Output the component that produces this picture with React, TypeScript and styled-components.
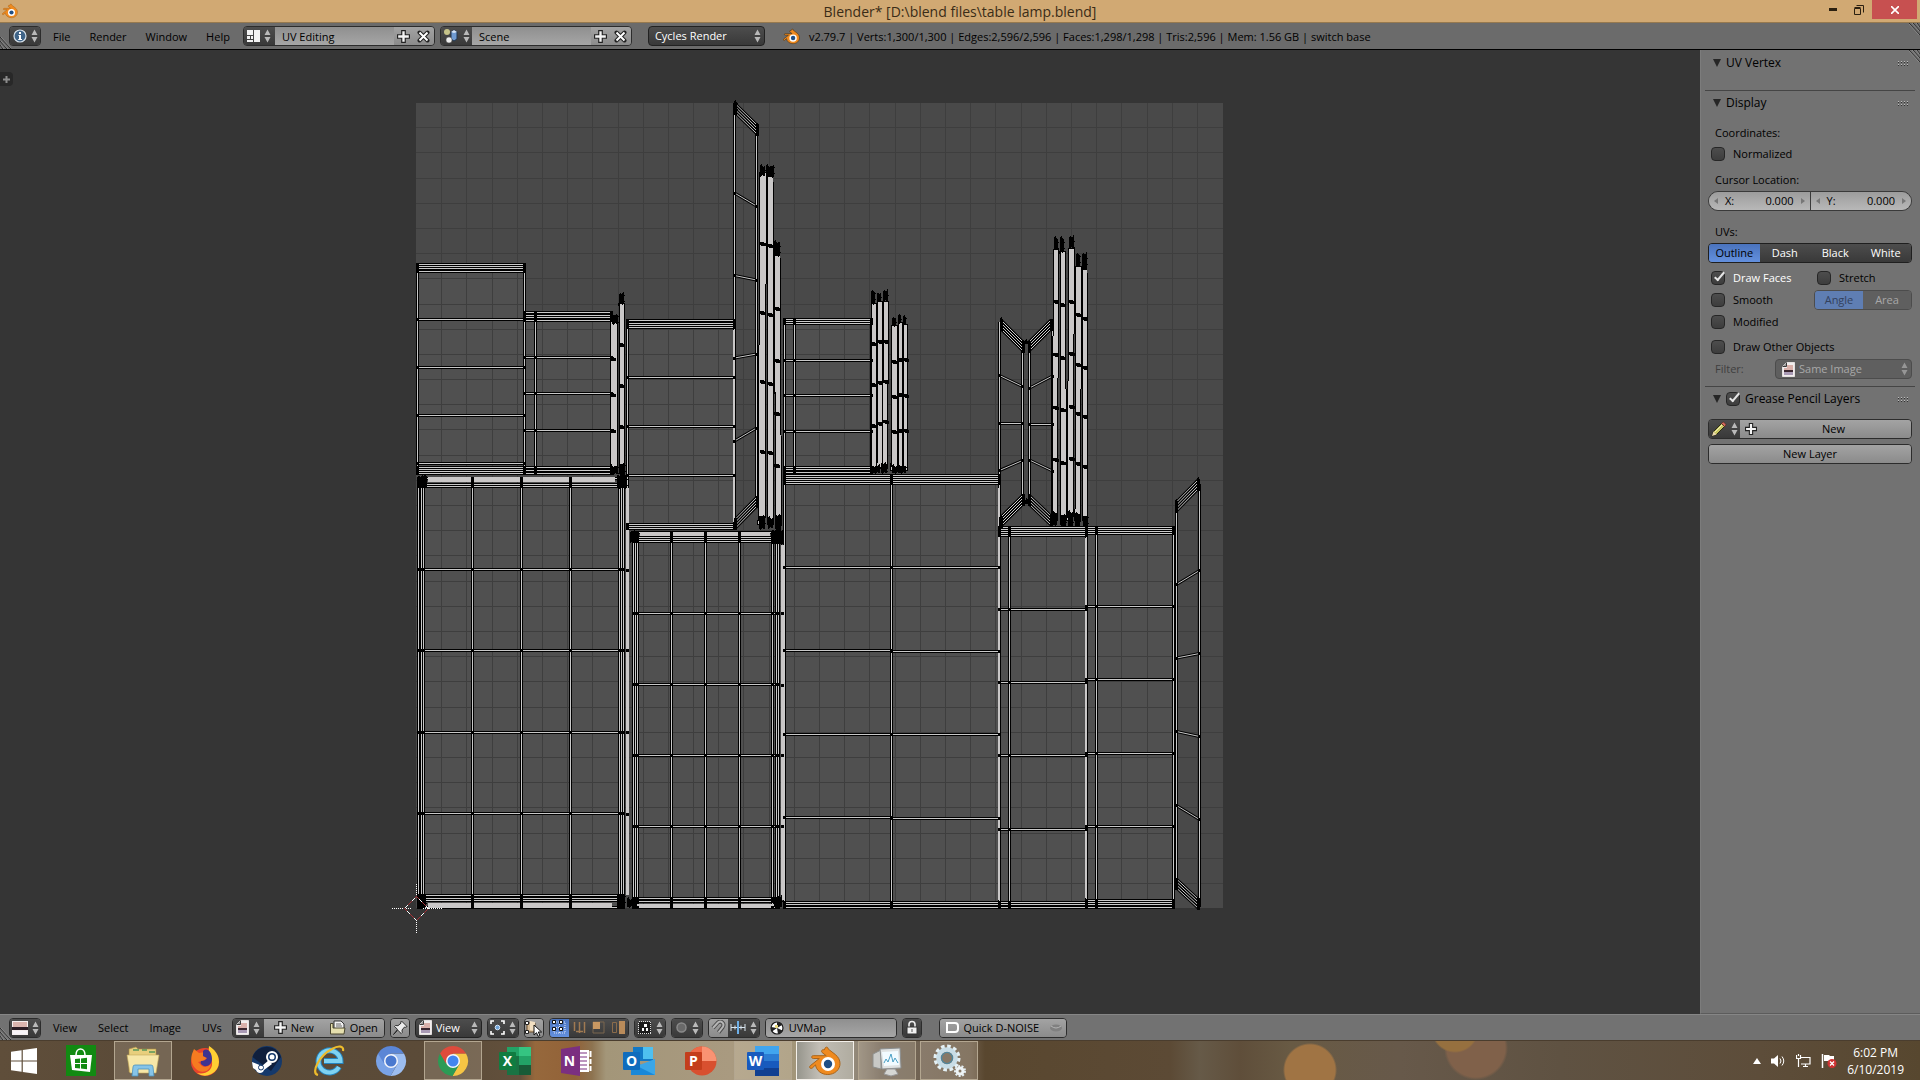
import React from "react";
import styled, { createGlobalStyle, css } from "styled-components";

const GlobalStyle = createGlobalStyle`
  *, *::before, *::after { box-sizing: border-box; }
  body { margin: 0; background: #353535; }
  button, input, select { font: inherit; color: inherit; margin: 0; }
  svg { display: block; flex: none; }
`;

const UI_FONT = `"Open Sans", "Noto Sans", sans-serif`;

/* ---------- window frame ---------- */

const Window = styled.div`
  display: flex;
  flex-direction: column;
  height: 100vh;
  overflow: hidden;
  font: 11px/20px ${UI_FONT};
  color: #000;
`;

const TitleBar = styled.header`
  display: grid;
  grid-template-columns: 1fr auto 1fr;
  height: 23px;
  flex: none;
  background: #d1a973;
  border-bottom: 1px solid #96794f;
`;

const TitleIcon = styled.div`
  padding: 3px 0 0 2px;
`;

const Title = styled.h1`
  margin: 0;
  font: 400 14px/24px ${UI_FONT};
  color: #3a2c17;
`;

const WindowButtons = styled.div`
  display: flex;
  justify-content: flex-end;
  padding-right: 3px;
`;

const WindowButton = styled.button<{ $close?: boolean }>`
  display: flex;
  align-items: center;
  justify-content: center;
  width: ${(p) => (p.$close ? 45 : 26)}px;
  height: 19px;
  padding: 0;
  border: 0;
  color: ${(p) => (p.$close ? "#fff" : "#2b2010")};
  background: ${(p) => (p.$close ? "#c75050" : "transparent")};
`;

const HeaderBar = styled.div<{ $bottom?: boolean }>`
  position: relative;
  display: flex;
  align-items: center;
  flex: none;
  height: ${(p) => (p.$bottom ? 26 : 27)}px;
  padding: 0 9px;
  background: ${(p) => (p.$bottom ? "#727272" : "#6b6b6b")};
  border-top: ${(p) => (p.$bottom ? "1px solid #868686" : "0")};
  border-bottom: ${(p) => (p.$bottom ? "0" : "1px solid #000")};
`;

const Corner = styled.svg<{ $right?: boolean }>`
  position: absolute;
  ${(p) => (p.$right ? "right: 0; top: 0;" : "left: 0; bottom: 0;")}
`;

const Menus = styled.nav<{ $bottom?: boolean }>`
  display: flex;
  gap: ${(p) => (p.$bottom ? 21 : 19)}px;
  padding: ${(p) => (p.$bottom ? "0 10px 0 12px" : "2px 13px 0 12px")};
`;

const MenuButton = styled.button`
  padding: 0;
  border: 0;
  background: none;
`;

const Group = styled.div<{ $gap?: number; $w?: number }>`
  display: flex;
  flex: none;
  height: 20px;
  width: ${(p) => (p.$w ? `${p.$w}px` : "auto")};
  margin-right: ${(p) => p.$gap ?? 5}px;
  border: 1px solid #2c2c2c;
  border-radius: 4px;
  overflow: hidden;
  > * + * {
    border-left: 1px solid #2c2c2c;
  }
`;

type Tone = "dark" | "light" | "blue" | "field";
const tones: Record<Tone, ReturnType<typeof css>> = {
  dark: css`background: linear-gradient(#4d4d4d, #393939); color: #fff;`,
  light: css`background: linear-gradient(#a3a3a3, #8b8b8b); color: #000;`,
  blue: css`background: linear-gradient(#4a73bd, #6390de); color: #000;`,
  field: css`background: linear-gradient(#8f8f8f, #a6a6a6); color: #000;`,
};

const Cell = styled.button<{ $tone?: Tone; $w?: number; $grow?: boolean; $pad?: number }>`
  display: flex;
  align-items: center;
  justify-content: center;
  gap: 4px;
  flex: ${(p) => (p.$grow ? "1 1 0" : "0 0 auto")};
  width: ${(p) => (p.$w ? `${p.$w}px` : "auto")};
  padding: 0 ${(p) => p.$pad ?? 0}px;
  border: 0;
  line-height: 18px;
  ${(p) => tones[p.$tone ?? "dark"]}
`;

const TextField = styled.input`
  flex: 1 1 0;
  min-width: 0;
  padding: 1px 7px 0;
  border: 0;
  border-radius: 0;
  outline: 0;
  line-height: 18px;
  ${tones.field}
`;

const FieldShell = styled.label`
  display: flex;
  align-items: center;
  flex: 1;
  padding-left: 4px;
  ${tones.field}
  input { background: none; padding: 0 5px; }
`;

const SelectShell = styled.div<{ $w?: number; $gap?: number; $disabled?: boolean; $tight?: boolean }>`
  display: flex;
  align-items: center;
  flex: ${(p) => (p.$w ? "none" : "1")};
  gap: 4px;
  height: 20px;
  width: ${(p) => (p.$w ? `${p.$w}px` : "auto")};
  margin-right: ${(p) => p.$gap ?? 5}px;
  padding: ${(p) => (p.$tight ? "0 3px" : "0 3px 0 6px")};
  border: 1px solid ${(p) => (p.$disabled ? "#4c4c4c" : "#222")};
  border-radius: 4px;
  ${(p) =>
    p.$disabled
      ? css`background: #5f5f5f; color: #a8a8a8;`
      : tones.dark}
`;

const Select = styled.select`
  appearance: none;
  flex: 1;
  min-width: 0;
  padding: 0;
  border: 0;
  outline: 0;
  background: none;
  line-height: 18px;
  opacity: 1;
`;

const Stats = styled.span`
  margin-left: 9px;
  padding-top: 2px;
  white-space: nowrap;
`;

/* ---------- editor ---------- */

const Editor = styled.main`
  display: flex;
  flex: 1;
  min-height: 0;
`;

const Canvas = styled.section`
  position: relative;
  flex: 1;
  min-width: 0;
  background: #353535;
`;

const Drawing = styled.svg`
  width: 100%;
  height: 100%;
`;

const ToolTab = styled.button`
  position: absolute;
  left: 0;
  top: 22px;
  display: flex;
  align-items: center;
  justify-content: center;
  width: 13px;
  height: 14px;
  padding: 0;
  border: 0;
  border-radius: 0 4px 4px 0;
  background: #282828;
`;

const Panel = styled.aside`
  position: relative;
  flex: none;
  width: 220px;
  padding-top: 1px;
  background: #727272;
  border-left: 1px solid #7c7c7c;
  border-bottom: 1px solid #5c5c5c;
`;

const Section = styled.section<{ $min?: number; $last?: boolean }>`
  min-height: ${(p) => p.$min ?? 0}px;
  margin: 0 5px 0 4px;
  padding: 0 3px;
  border-bottom: ${(p) => (p.$last ? "0" : "1px solid #454545")};
`;

const SectionHead = styled.header`
  display: flex;
  align-items: center;
  gap: 5px;
  height: 24px;
  padding: 0 2px 0 5px;
  > svg:last-child { margin-left: auto; }
`;

const SectionTitle = styled.h2`
  margin: 0;
  font: 400 12px/20px ${UI_FONT};
`;

const Stack = styled.div<{ $top?: number; $gap?: number; $bottom?: number }>`
  display: flex;
  flex-direction: column;
  gap: ${(p) => p.$gap ?? 1}px;
  padding-top: ${(p) => p.$top ?? 0}px;
  padding-bottom: ${(p) => p.$bottom ?? 0}px;
`;

const Caption = styled.p<{ $w?: number; $dim?: boolean }>`
  margin: 0;
  padding-left: 7px;
  width: ${(p) => (p.$w ? `${p.$w}px` : "auto")};
  height: 20px;
  color: ${(p) => (p.$dim ? "#3f3f3f" : "#000")};
`;

const Row = styled.div`
  display: flex;
  height: 20px;
`;

const Half = styled.div<{ $w?: number }>`
  flex: ${(p) => (p.$w ? "none" : "1")};
  width: ${(p) => (p.$w ? `${p.$w}px` : "auto")};
`;

const Segments = styled.div<{ $disabled?: boolean }>`
  display: flex;
  flex: 1;
  height: 20px;
  border: 1px solid ${(p) => (p.$disabled ? "#4c4c4c" : "#1f1f1f")};
  border-radius: 4px;
  overflow: hidden;
  > * + * { border-left: 1px solid ${(p) => (p.$disabled ? "#4c4c4c" : "#1f1f1f")}; }
`;

const Segment = styled.button<{ $on?: boolean }>`
  flex: 1;
  padding: 0;
  border: 0;
  line-height: 18px;
  ${(p) => tones[p.$on ? "blue" : "dark"]}
  &:disabled {
    background: ${(p) => (p.$on ? "#5f7eb3" : "#5f5f5f")};
    color: ${(p) => (p.$on ? "#33415c" : "#a8a8a8")};
  }
`;

const Check = styled.label<{ $on?: boolean }>`
  display: flex;
  align-items: center;
  gap: 8px;
  height: 20px;
  padding-left: 3px;
  color: ${(p) => (p.$on ? "#fff" : "#000")};
`;

const CheckBox = styled.input`
  appearance: none;
  position: relative;
  flex: none;
  width: 14px;
  height: 14px;
  border: 1px solid #262626;
  border-radius: 4px;
  background: linear-gradient(#4d4d4d, #3d3d3d);
  &:checked::after {
    content: "";
    position: absolute;
    left: 5px;
    top: -2px;
    width: 5px;
    height: 11px;
    border: solid #e6e6e6;
    border-width: 0 2px 2px 0;
    transform: rotate(40deg);
  }
`;

const NumberPair = styled.div`
  display: flex;
  height: 20px;
  border: 1px solid #3a3a3a;
  border-radius: 10px;
  overflow: hidden;
  > * + * { border-left: 1px solid #3a3a3a; }
`;

const NumberCell = styled.label`
  display: flex;
  align-items: center;
  flex: 1 1 0;
  gap: 7px;
  min-width: 0;
  padding: 0 5px;
  line-height: 18px;
  background: linear-gradient(#9c9c9c, #b8b8b8);
  input {
    flex: 1;
    min-width: 0;
    width: 0;
    padding: 0;
    border: 0;
    outline: 0;
    text-align: right;
    background: none;
  }
`;

/* ---------- taskbar ---------- */

const TaskBar = styled.footer`
  display: flex;
  flex: none;
  justify-content: space-between;
  height: 40px;
  border-top: 1px solid #4a3d2e;
  background:
    radial-gradient(circle at 1310px 29px, #a07444 25px, transparent 27px),
    radial-gradient(circle at 1455px -12px, #96703f 22px, transparent 24px),
    radial-gradient(circle at 1476px 7px, #80614a 29px, transparent 32px),
    linear-gradient(90deg, #5f4e3a 0, #5a4a38 160px, #5b4b38 440px, #62503c 520px, #96683c 535px, #926238 575px, #8d7350 592px,
      #a39679 606px, #a99a80 730px, #a39679 790px, #9a9080 850px, #74685a 880px, #6d5d4a 970px, #59472f 985px, #5c4a35 1170px, #665a48 1200px, #5f4e3a 1240px,
      #685a44 1290px, #67594a 1400px, #5f5242 1560px, #5d4d3a 1760px, #57472f 1920px);
`;

const Tasks = styled.div`
  display: flex;
  gap: 4px;
`;

const Task = styled.button<{ $open?: boolean; $active?: boolean; $w?: number }>`
  display: flex;
  align-items: center;
  justify-content: center;
  width: ${(p) => p.$w ?? 58}px;
  height: 39px;
  padding: 0;
  border: 1px solid ${(p) => (p.$active ? "#f4f0ea" : p.$open ? "#b3a690" : "transparent")};
  background: ${(p) => (p.$active ? "linear-gradient(90deg, #96958c, #c2beb6 40%, #b0aca0)" : p.$open ? "rgba(255, 246, 225, 0.17)" : "none")};
`;

const Tray = styled.div`
  display: flex;
  align-items: center;
  gap: 10px;
  padding-right: 16px;
`;

const Clock = styled.time`
  font: 12px/17px ${UI_FONT};
  color: #fff;
  text-align: center;
`;

/* ---------- small drawings ---------- */

const Arrows = ({ dim }: { dim?: boolean }) => (
  <svg width="7" height="14" viewBox="0 0 7 14" fill={dim ? "#969696" : "#b9b9b9"}>
    <path d="M3.500 0.500L6.500 6H.5zM3.500 13.500L6.500 8H.5z" />
  </svg>
);

const Plus = ({ s = 11 }: { s?: number }) => (
  <svg width={s} height={s} viewBox="0 0 11 11">
    <path d="M4 .5h3V4h3.500v3H7v3.500H4V7H.5V4H4z" fill="#f4f4f4" stroke="#222" strokeWidth="1" />
  </svg>
);

const Cross = () => (
  <svg width="13" height="13" viewBox="0 0 13 13">
    <path d="M2.500 2.500l8 8M10.500 2.500l-8 8" stroke="#222" strokeWidth="4" strokeLinecap="round" />
    <path d="M2.500 2.500l8 8M10.500 2.500l-8 8" stroke="#fff" strokeWidth="2" />
  </svg>
);

const InfoIcon = () => (
  <svg width="14" height="14" viewBox="0 0 14 14">
    <circle cx="7" cy="7" r="6" fill="#3f6488" stroke="#d5e0ea" strokeWidth="1.200" />
    <path d="M6 3h2v2H6zM5.500 6H8v4h1v1H5.200v-1H6V7h-.5z" fill="#fff" />
  </svg>
);

const ScreenIcon = () => (
  <svg width="13" height="14" viewBox="0 0 13 14" fill="#f2f2f2" shapeRendering="crispEdges">
    <path d="M0 1h6v5H0zM0 7h3v3H0zM4 7h2v3H4zM7 1h6v12H7zM0 11h6v2H0z" />
  </svg>
);

const SceneIcon = () => (
  <svg width="16" height="16" viewBox="0 0 16 16">
    <circle cx="4" cy="4" r="3" fill="#e6e29a" opacity=".8" />
    <path d="M8 4l3-2 3 2v7l-3 2-3-2z" fill="#6f9ad0" stroke="#23374f" />
    <path d="M8 4l3-2 3 2-3 1z" fill="#d6e5f6" />
    <circle cx="6" cy="12" r="3" fill="#eee" stroke="#555" strokeWidth=".5" />
  </svg>
);

const BlenderLogo = ({ s, flat }: { s: number; flat?: boolean }) => (
  <svg width={s} height={s} viewBox="0 0 32 30">
    <path
      d="M16.500 1.500c1.400-1 3 .2 2.600 1.400l7.300 5.700c3 2.500 4.600 5.500 4.600 9 0 6-5.200 10.900-12.200 10.900-6.400 0-11.500-4-12.300-9.600L3.300 22c-2 1.300-3.700-.8-2-2.300l9-7.200H4.300c-2.200 0-2.200-2.800 0-2.800h12.900l-4.100-3.200c-1.500-1.500.3-3.600 2-2.500z"
      fill="#ef8a1f"
      stroke={flat ? "#a9641a" : "#3d2a12"}
      strokeWidth="1"
    />
    <circle cx="19" cy="18" r="7" fill="#fff" />
    <circle cx="19" cy="18" r="4.200" fill="#1f4f86" />
  </svg>
);

const ImageIcon = ({ page }: { page?: boolean }) => (
  <svg width={page ? 13 : 16} height={page ? 15 : 14} viewBox={page ? "0 0 13 15" : "0 0 16 14"}>
    {page ? (
      <>
        <path d="M4.500.5h8v14H.5v-10z" fill="#f1eeee" stroke="#e4e0e0" />
        <path d="M.5 4.500h4v-4" fill="#9c9c9c" stroke="#3a3a3a" />
        <path d="M5 3h6v5H2V6h3z" fill="#d9b0aa" />
        <path d="M2 8h9v2H2z" fill="#3b2730" />
        <path d="M2 10h9v3H2z" fill="#a99ab5" />
      </>
    ) : (
      <>
        <path d="M0 0h16v14H0z" fill="#f4eeee" />
        <path d="M1 1h14v5H1z" fill="#dab4ae" />
        <path d="M0 6h16v3H0z" fill="#2c1e26" />
        <path d="M1 10h14v3H1z" fill="#f8f4f8" />
      </>
    )}
  </svg>
);

const FolderIcon = () => (
  <svg width="16" height="15" viewBox="0 0 16 15">
    <path d="M4 1h7l3 3v8H4z" fill="#f2f2f2" stroke="#333" />
    <path d="M6 4h5M6 6h6" stroke="#666" />
    <path d="M.5 3.500H3V8h12l-1 6H.5z" fill="#e5dfae" stroke="#4a4630" />
  </svg>
);

const PinIcon = () => (
  <svg width="16" height="16" viewBox="0 0 16 16">
    <path d="M9.500 1l5.500 5.500-1.500.8-1-.3-2.500 3 .2 2.500-1 1-3.400-3.300L1.500 14.500l4-5.200L2.500 6.500l1-1L6 5.700l3-2.500L8.700 2z" fill="#ececec" stroke="#222" strokeWidth=".9" />
  </svg>
);

const PivotIcon = () => (
  <svg width="15" height="15" viewBox="0 0 15 15" fill="none">
    <path d="M1 4V1h3M11 1h3v3M14 11v3h-3M4 14H1v-3" stroke="#fff" strokeWidth="1.600" />
    <circle cx="7.500" cy="7.500" r="2.300" fill="#6fa3d8" stroke="#d6e7f8" />
  </svg>
);

const SyncIcon = () => (
  <svg width="18" height="18" viewBox="0 0 18 18">
    <path d="M2 4h8v9H2z" fill="#d9bd97" stroke="#6b4d2a" />
    <path d="M5 2l5 1v9l-5-1z" fill="#f1dfc2" />
    <path d="M.5 2.500h3v3h-3zM.5 11.500h3v3h-3z" fill="#fff" stroke="#222" />
    <path d="M9 6v10l2.500-2.300 1.600 3.600 1.800-.8-1.600-3.500h3.300z" fill="#fff" stroke="#111" />
  </svg>
);

const ModeIcon = ({ kind }: { kind: "vertex" | "edge" | "face" | "island" }) => (
  <svg width="15" height="15" viewBox="0 0 15 15" fill="none">
    {kind === "vertex" && (
      <>
        <path d="M2 2h11v11H2zM7.500 2v11M2 7.500h11" stroke="#dbe6fa" strokeDasharray="1 1" />
        <path d="M.5.5h3v3h-3zM7.500.5h3v3h-3zM.5 7.500h3v3h-3zM7.500 7.500h3v3h-3z" fill="#fff" stroke="#111" />
      </>
    )}
    {kind === "edge" && <path d="M2.500 2v9M7.500 2v11M12.500 2v11M4 11.500h7" stroke="#a07a52" strokeWidth="1.500" />}
    {kind === "face" && (
      <>
        <path d="M2 2h11v11H2z" stroke="#7b664e" />
        <path d="M2 2h7v7H2z" fill="#c99862" />
      </>
    )}
    {kind === "island" && (
      <>
        <path d="M1.500 2.500h4v10h-4z" stroke="#8b6c4b" />
        <path d="M8 1h6v13H8z" fill="#b98b5a" />
      </>
    )}
  </svg>
);

const SnapTarget = () => (
  <svg width="15" height="15" viewBox="0 0 15 15" shapeRendering="crispEdges">
    <path d="M1.500 1.500h12v12h-12z" fill="#1c1c1c" stroke="#ddd" strokeDasharray="1 1" />
    <path d="M7 4h3v3H7zM9 8h2v3H9zM5 8h2v3H5z" fill="#fff" />
  </svg>
);

const FalloffIcon = () => (
  <svg width="13" height="13" viewBox="0 0 13 13">
    <circle cx="6.500" cy="6.500" r="4.500" fill="#6a6a6a" stroke="#8a8a8a" strokeWidth="1.500" />
  </svg>
);

const MagnetIcon = () => (
  <svg width="15" height="15" viewBox="0 0 15 15" fill="none">
    <path d="M2 8l5-5.500c3-2.500 7 1 4.800 4.500L7.500 12.500" stroke="#4e4e4e" strokeWidth="4" />
    <path d="M2 8l5-5.500c3-2.500 7 1 4.800 4.500L7.500 12.500" stroke="#b5b5b5" strokeWidth="2" />
  </svg>
);

const IncrementIcon = () => (
  <svg width="16" height="13" viewBox="0 0 16 13" fill="none">
    <path d="M1 3v7M15 3v7M1 6.500h14M5 4.500v4M11 4.500v4" stroke="#d8e4ee" />
    <path d="M8 0v13" stroke="#6db0ea" strokeWidth="2" />
  </svg>
);

const UvIcon = () => (
  <svg width="14" height="14" viewBox="0 0 14 14">
    <circle cx="7" cy="7" r="6" fill="#fff" stroke="#1a1a1a" strokeWidth="1.200" />
    <path d="M7 1a6 6 0 0 1 5 3L7 7zM7 7l5.500 2.500A6 6 0 0 1 8 13zM7 7L2 10.500A6 6 0 0 1 1 6z" fill="#222" />
    <path d="M5 4h3v3H5z" fill="#e9d97c" />
  </svg>
);

const LockIcon = () => (
  <svg width="12" height="15" viewBox="0 0 12 15">
    <path d="M3 7V4.500a3 3 0 0 1 6 0V7" fill="none" stroke="#eee" strokeWidth="1.600" />
    <path d="M1 7h10v7H1z" fill="#f0f0f0" stroke="#333" />
    <path d="M6 9v3" stroke="#555" />
  </svg>
);

const PencilIcon = () => (
  <svg width="16" height="16" viewBox="0 0 16 16">
    <path d="M1 15l1.500-4.500 8-8 3 3-8 8z" fill="#c9c763" stroke="#2a2a16" />
    <path d="M10.500 2.500L12 1c1 0 3 2 3 3l-1.500 1.500z" fill="#d36b5d" stroke="#4d201a" strokeWidth=".6" />
    <path d="M1 15l1.500-4.500 3 3z" fill="#ecd9b0" />
    <path d="M4 11l7-7" stroke="#f1f0b5" />
  </svg>
);

const Triangle = () => (
  <svg width="8" height="8" viewBox="0 0 8 8"><path d="M0 0h8L4 8z" fill="#262626" /></svg>
);

const Grip = () => (
  <svg width="12" height="6" viewBox="0 0 12 6">
    <path d="M0 1.500h12M0 4.500h12" stroke="#bdbdbd" strokeDasharray="1 2" />
    <path d="M0 2.500h12M0 5.500h12" stroke="#333" strokeDasharray="1 2" />
  </svg>
);

const Caret = ({ flip }: { flip?: boolean }) => (
  <svg width="4" height="6" viewBox="0 0 4 6"><path d={flip ? "M4 0v6L0 3z" : "M0 0v6l4-3z"} fill="#777" /></svg>
);

const CornerMarks = ({ right }: { right?: boolean }) => (
  <Corner $right={right} width="11" height="13" viewBox="0 0 11 13" fill="none">
    <path d="M0 1l11 12M0 5l7 8M0 9l3 4" transform={right ? "rotate(180 5.500 6.500)" : undefined} stroke="#2b2b2b" />
    <path d="M1 1l10 11M1 5l7 8M1 9l3 4" transform={right ? "rotate(180 5.500 6.500)" : undefined} stroke="#a0a0a0" strokeWidth=".6" />
  </Corner>
);

/* ---------- UV layout ---------- */

type Seg = [number, number, number, number];

const segs: Seg[] = [];
const slants: Seg[] = [];
const dots: [number, number][] = [];
const fills: string[] = [];

const ends = (a: number[]) => [Math.min(...a), Math.max(...a)];
const sheet = (xs: number[], ys: number[]) => {
  const [x1, x2] = ends(xs);
  const [y1, y2] = ends(ys);
  fills.push(`M${x1} ${y1}H${x2}V${y2}H${x1}z`);
  ys.forEach((y) => segs.push([x1 - 0.5, y, x2 + 0.5, y]));
  xs.forEach((x) => segs.push([x, y1 - 0.5, x, y2 + 0.5]));
  xs.forEach((x) => ys.forEach((y) => dots.push([x, y])));
};
const fan = (x1: number, y1: number, x2: number, y2: number) => {
  for (let i = 0; i < 4; i++) {
    slants.push([x1, y1 + 3 * i, x2, y2 + 3 * i]);
    dots.push([x1, y1 + 3 * i], [x2, y2 + 3 * i]);
  }
};
const link = (x1: number, y1: number, x2: number, y2: number) => {
  slants.push([x1, y1, x2, y2]);
  dots.push([x1, y1], [x2, y2]);
};

// upper left pieces
sheet([417.5, 524.5], [264.5, 266.5, 268.5, 271.5, 319.5, 367.5, 415.5, 463.5, 467.5, 469.5, 471.5, 473.5]);
sheet([524.5, 535.5, 611.5], [312.5, 315.5, 317.5, 320.5, 357.5, 393.5, 430.5, 467.5, 470.5, 473.5]);
// large left body
sheet([418.5, 421.5, 423.5, 472.5, 521.5, 570.5, 619.5, 621.5, 623.5], [478.5, 484.5, 486.5, 569.5, 650.5, 732.5, 813.5, 895.5, 898.5, 900.5, 907.5]);
// second column
sheet([627.5, 734.5], [320.5, 323.5, 325.5, 327.5, 377.5, 426.5, 475.5, 524.5, 526.5, 528.5]);
sheet([633.5, 635.5, 637.5, 671.5, 705.5, 739.5, 772.5, 776.5, 778.5], [532.5, 537.5, 539.5, 541.5, 613.5, 684.5, 755.5, 826.5, 898.5, 901.5, 907.5]);
// third column
sheet([784.5, 794.5, 871.5], [319.5, 321.5, 323.5, 360.5, 395.5, 431.5, 467.5, 469.5, 472.5]);
sheet([784.5, 891.5], [475.5, 477.5, 479.5, 481.5, 483.5, 567.5, 650.5, 734.5, 817.5, 902.5, 904.5, 907.5]);
sheet([891.5, 999.5], [475.5, 477.5, 479.5, 481.5, 483.5, 567.5, 651.5, 734.5, 818.5, 902.5, 904.5, 907.5]);
// lower right columns
sheet([999.5, 1009.5, 1086.5], [527.5, 529.5, 531.5, 533.5, 535.5, 609.5, 682.5, 755.5, 829.5, 902.5, 904.5, 907.5]);
sheet([1086.5, 1096.5, 1173.5], [527.5, 529.5, 531.5, 533.5, 606.5, 679.5, 753.5, 826.5, 900.5, 902.5, 904.5, 907.5]);

// tall flap
segs.push([734.5, 103, 734.5, 530], [756.5, 126, 756.5, 506]);
fan(735.5, 104, 757, 125);
link(734.5, 193, 756.5, 206);
link(734.5, 275.5, 756.5, 280);
link(734.5, 358, 756.5, 354);
link(734.5, 441, 756.5, 428);
fan(735.5, 519, 757, 497);

// hourglass
segs.push([999.5, 322, 999.5, 526], [1022.5, 348, 1022.5, 498], [1029.5, 348, 1029.5, 498], [1052.5, 325, 1052.5, 520]);
fan(1001, 320, 1023, 342);
fan(1029, 342, 1051, 320);
link(999.5, 375.5, 1022.5, 386.5);
link(1029.5, 388, 1052.5, 376);
link(999.5, 423.5, 1022.5, 423.5);
link(1029.5, 424.5, 1052.5, 424.5);
link(999.5, 470.5, 1022.5, 460.5);
link(1029.5, 460, 1052.5, 471);
fan(1001, 517, 1023, 495);
fan(1029, 495, 1051, 516);

// right flap
segs.push([1176.5, 505, 1176.5, 884], [1199.5, 484, 1199.5, 906]);
fan(1176.5, 502, 1198, 480);
link(1176.5, 584.5, 1199.5, 570.5);
link(1176.5, 658, 1199.5, 653.5);
link(1176.5, 731.5, 1199.5, 736.5);
link(1176.5, 805.5, 1199.5, 819.5);
fan(1176.5, 879, 1198, 899);

// narrow filled strips: top-left x, top-right x, bottom-left x, bottom-right x, top y, bottom y, crossings
const strips: [number, number, number, number, number, number, number[]][] = [
  [610, 617, 610, 617, 318, 470, [358, 394, 430]],
  [619, 624, 620, 624, 303, 470, [344.5, 385.5, 426]],
  [760, 766.5, 758, 765, 172, 524, [243.5, 312.5, 381.5, 451]],
  [767.5, 773, 768, 774, 176, 524, [245.5, 314.5, 383.5, 452.5]],
  [774.5, 780, 775.5, 781.5, 255, 524, [308.5, 360.5, 413.5, 465.5]],
  [871, 876, 871, 876, 303, 468, [343.5, 384.5, 425.5]],
  [877.5, 882.5, 877, 882, 301, 468, [341.5, 382.5, 423]],
  [883.5, 888.5, 882.5, 887.5, 301, 468, [341, 381.5, 421]],
  [891.5, 897, 891, 897, 325, 470, [361.5, 396.5, 431.5]],
  [898, 902, 898, 902, 322, 470, [359.5, 394.5, 430.5]],
  [903.5, 907.5, 903.5, 907.5, 324, 470, [359.5, 395.5, 430.5]],
  [1053.5, 1058.5, 1052, 1057.5, 249, 520, [301.5, 354.5, 407.5, 459.5]],
  [1060, 1065.5, 1061, 1066.5, 251, 520, [304.5, 357, 409.5, 462.5]],
  [1069, 1074.5, 1067, 1073, 248, 520, [301, 353.5, 406, 458.5]],
  [1075.5, 1081.5, 1075, 1080.5, 266, 520, [314.5, 364.5, 413.5, 463.5]],
  [1082.5, 1087, 1083, 1088, 269, 520, [318.5, 367, 416.5, 466.5]],
];

// solid slabs along the body edges
const slabs: Seg[] = [
  [428, 477, 615, 482],
  [428, 903, 612, 907],
  [626, 488, 629, 895],
  [640, 532, 770, 536],
  [638, 904, 775, 908],
  [781, 545, 784, 900],
  [998, 488, 1000, 900],
  [1085, 538, 1087, 898],
  [733, 330, 735, 522],
];

// clusters of overlapping vertices
const clusters: Seg[] = [
  [418, 476, 427, 487], [617, 475, 627, 488], [610, 466, 618, 474], [619, 464, 625, 475], [612, 315, 618, 324], [619, 294, 624, 304],
  [418, 896, 426, 907], [617, 895, 625, 907], [627, 899, 637, 907], [630, 532, 638, 542], [772, 530, 783, 544], [774, 897, 782, 907],
  [760, 166, 765, 176], [766, 166, 774, 177], [774, 242, 780, 256], [759, 516, 765, 529], [768, 518, 773, 528], [775, 515, 781, 530],
  [871, 292, 875, 304], [877, 293, 881, 301], [883, 291, 888, 301], [872, 466, 880, 473], [881, 464, 887, 473],
  [892, 318, 896, 326], [898, 315, 901, 323], [903, 317, 906, 325], [892, 466, 906, 473],
  [1054, 238, 1058, 250], [1060, 238, 1064, 252], [1069, 237, 1074, 248], [1076, 255, 1080, 266], [1082, 254, 1087, 269],
  [1052, 513, 1057, 525], [1060, 515, 1066, 526], [1068, 512, 1073, 526], [1075, 514, 1080, 526], [1083, 516, 1088, 526],
  [734, 102, 737, 112], [756, 123, 758, 132], [1000, 318, 1002, 328], [1022, 341, 1030, 344], [1022, 500, 1030, 504],
  [999, 518, 1001, 530], [1050, 321, 1052, 330], [1175, 501, 1177, 510], [1197, 479, 1199, 489], [1197, 902, 1200, 909],
];

const lumpy = ([x1, y1, x2, y2]: Seg) => {
  let d = `M${x1} ${y1}`;
  let k = Math.round(x1 + y1);
  for (let x = x1; x < x2; x += 3) d += `L${x + 1.5} ${y1 - (k++ % 3)}L${Math.min(x + 3, x2)} ${y1 + (k % 2)}`;
  for (let y = y1; y < y2; y += 3) d += `L${x2 + (k++ % 2)} ${y + 1.5}L${x2} ${Math.min(y + 3, y2)}`;
  for (let x = x2; x > x1; x -= 3) d += `L${x - 1.5} ${y2 + (k++ % 2)}L${Math.max(x - 3, x1)} ${y2 - (k % 2)}`;
  return d + "z";
};

const toPath = (list: Seg[]) => list.map(([a, b, c, d]) => `M${a} ${b}L${c} ${d}`).join("");
const segPath = toPath(segs);
const slantPath = toPath(slants);
const dotPath = dots.map(([x, y]) => `M${x - 1.5} ${y - 1.5}h3v3h-3z`).join("");
const gridPath = Array.from({ length: 31 }, (_, i) => {
  const o = Math.round((i + 1) * 25.19);
  return `M${416.5 + o} 103V908M416 ${103.5 + o - 1}H1223`;
}).join("");

const UvLayout = () => (
  <Drawing viewBox="0 50 1700 964" preserveAspectRatio="xMidYMid slice" shapeRendering="crispEdges" fill="none" role="img" aria-label="UV layout">
    <rect x="416" y="103" width="807" height="805" fill="#494949" />
    <path d={fills.join("")} fill="#505050" />
    <path d={gridPath} stroke="#3e3e3e" />
    <path d={segPath} stroke="#000" strokeWidth="3" />
    <path d={slantPath} stroke="#000" strokeWidth="3" shapeRendering="geometricPrecision" />
    <path d={segPath} stroke="#c9c9c9" />
    <path d={slantPath} stroke="#c9c9c9" shapeRendering="geometricPrecision" />
    {slabs.map(([x1, y1, x2, y2]) => (
      <rect key={`${x1}-${y1}`} x={x1} y={y1} width={x2 - x1} height={y2 - y1} fill="#c9c7c7" />
    ))}
    <path
      d="M472.500 477V488M521.500 477V488M570.500 477V488M671.500 531V543M705.500 531V543M739.500 531V543M472.500 895V908M521.500 895V908M570.500 895V908M671.500 897V908M705.500 897V908M739.500 897V908M626 570h3M626 650h3M626 732h3M626 814h3M781 613h3M781 685h3M781 755h3M781 826h3"
      stroke="#000"
      strokeWidth="3"
    />
    {strips.map(([a, b, c, d, t, u, cross]) => (
      <g key={`${a}-${t}`}>
        <path d={`M${a} ${t}H${b}L${d} ${u}H${c}z`} fill="#c9c7c7" stroke="#000" />
        <path d={cross.map((y) => `M${a - 0.5} ${y}h3v1h3`).join("")} stroke="#000" strokeWidth="3" />
      </g>
    ))}
    <path d={dotPath} fill="#000" />
    <path d={clusters.map(lumpy).join("")} fill="#000" />
    <g>
      <path d="M392 908.500H412M423 908.500H443M416.500 884V898M416.500 920V934" stroke="#fff" strokeDasharray="1 1" />
      <path d="M404.500 908.500l12-12 12 12-12 12z" stroke="#a33238" />
      <path d="M404.500 908.500l12-12 12 12-12 12z" stroke="#fff" strokeDasharray="5 5" />
    </g>
  </Drawing>
);

/* ---------- taskbar icons ---------- */

const OfficeTile = ({ letter, c, back }: { letter: string; c: string; back: React.ReactNode }) => (
  <svg width="32" height="32" viewBox="0 0 32 32">
    {back}
    <rect x="0" y="7" width="17" height="18" rx="1" fill={c} />
    <text x="8.500" y="21" textAnchor="middle" fontFamily="Open Sans, sans-serif" fontWeight="700" fontSize="14" fill="#fff">{letter}</text>
  </svg>
);

const ChromeIcon = ({ mono }: { mono?: boolean }) => (
  <svg width="32" height="32" viewBox="0 0 32 32">
    <path d="M16 16V8.500h13A15 15 0 0 1 15.500 31l7-12z" fill={mono ? "#9cbdf0" : "#f6c544"} />
    <path d="M16 16l6.500 3-7 12A15 15 0 0 1 3 8.500z" fill={mono ? "#79a2e6" : "#2b9b55"} />
    <path d="M3 8.500A15 15 0 0 1 29 8.500H16l-7 10z" fill={mono ? "#5b86d6" : "#de4b3c"} />
    <circle cx="16" cy="16" r="7" fill="#f4f6fb" />
    <circle cx="16" cy="16" r="5.500" fill={mono ? "#4a79cf" : "#4385ee"} />
  </svg>
);

const WindowsIcon = () => (
  <svg width="26" height="26" viewBox="0 0 26 26" fill="#fff">
    <path d="M0 3.700l10.600-1.500v10.200H0zM11.800 2L26 0v12.400H11.800zM0 13.600h10.600v10.200L0 22.300zM11.800 13.600H26V26l-14.200-2z" />
  </svg>
);

const StoreIcon = () => (
  <svg width="30" height="31" viewBox="0 0 30 31">
    <rect width="30" height="31" fill="#128a12" />
    <path d="M4 10h22l-2 17-18-2z" fill="#fff" />
    <path d="M10 10c0-8 9-8 9 0" fill="none" stroke="#fff" strokeWidth="1.600" />
    <path d="M9 14l5-.5V18H9zM15 13.400l6-.6V18h-6zM9 19h5v4.500L9 23zM15 19h6v5.200l-6-.6z" fill="#128a12" />
  </svg>
);

const ExplorerIcon = () => (
  <svg width="34" height="32" viewBox="0 0 34 32">
    <path d="M3 4l7-2 2 2h18v23H3z" fill="#e8cf7d" stroke="#a88d45" strokeWidth=".6" />
    <path d="M7 5h6M16 5h5M23 7h6" stroke="#57975a" strokeWidth="1.500" />
    <path d="M1 10h32l-3 18H4z" fill="#f7e7a8" stroke="#c2a75b" strokeWidth=".6" />
    <path d="M6 31l1-9q0-2 2-2h16q2 0 2 2l1 9h-5v-7H12v7z" fill="#86c4e8" stroke="#4b92bd" strokeWidth=".8" />
  </svg>
);

const FirefoxIcon = () => (
  <svg width="32" height="32" viewBox="0 0 32 32">
    <circle cx="16" cy="17" r="14" fill="#e8452b" />
    <path d="M20 1c5 3 10 8 10 16a14 14 0 0 1-22 11c9 2 16-3 15-11-.6-5-4-9-3-16z" fill="#ffcf33" />
    <path d="M3 9l2-5 5 4 6-1-2 4 4 2-4 3-5 1 4 4c4 2 7 0 9-2-1 7-7 9-12 7C4 23 1 16 3 9z" fill="#f57b20" />
    <path d="M14 6c4-4 9 1 9 8 0 5-4 8-8 7-3-1-4-3-3-5 3 0 5-1 6-3l-4-2z" fill="#3f3390" />
  </svg>
);

const SteamIcon = () => (
  <svg width="32" height="32" viewBox="0 0 32 32">
    <circle cx="16" cy="16" r="15" fill="#15396b" />
    <path d="M1.500 12A15 15 0 0 1 30 12l-10 14z" fill="#0f1f3d" />
    <path d="M1 17l10 4 7-6 3 4-8 6c-1 4-7 4-8 0l-3-2z" fill="#fff" />
    <circle cx="21" cy="12" r="5" fill="#15396b" stroke="#fff" strokeWidth="2" />
    <circle cx="21" cy="12" r="2.500" fill="#fff" />
    <circle cx="10" cy="22.500" r="2.500" fill="none" stroke="#15396b" />
  </svg>
);

const IeIcon = () => (
  <svg width="32" height="32" viewBox="0 0 32 32" fill="none">
    <path d="M26 22a11 11 0 1 1 1.500-6H11" stroke="#2585bf" strokeWidth="6" />
    <path d="M26 22a11 11 0 1 1 1.500-6H11" stroke="#7fd3f2" strokeWidth="4" />
    <path d="M5 30c-8-2 2-20 14-26 7-4 12-3 11 2" stroke="#eebc2c" strokeWidth="2.200" />
  </svg>
);

const MonitorIcon = () => (
  <svg width="32" height="32" viewBox="0 0 32 32">
    <path d="M2 9l8-4v19l-8-2z" fill="#c8c9c6" stroke="#8d8f8c" />
    <path d="M9 4l20-1 1 20-19 1z" fill="#dfe2e2" stroke="#8b8f90" />
    <path d="M11 7l16-1 1 14-15 1z" fill="#f2fbff" />
    <path d="M13 18l2-4 2 3 3-8 2 8 2-4 3 5" fill="none" stroke="#4a9fc4" />
    <path d="M16 24h8l3 5-7 2-7-2z" fill="#d6d7d4" stroke="#999" />
  </svg>
);

const GearsIcon = () => (
  <svg width="34" height="34" viewBox="0 0 34 34" fill="none">
    <circle cx="15" cy="14" r="11.500" stroke="#e4f0f4" strokeWidth="4" strokeDasharray="3.500 2.500" />
    <circle cx="15" cy="14" r="8.500" stroke="#c8dde6" strokeWidth="4.500" />
    <circle cx="15" cy="14" r="5.500" stroke="#4a89a5" strokeWidth="1.200" />
    <circle cx="28" cy="27" r="5" stroke="#e4eef2" strokeWidth="2" strokeDasharray="2 1.500" />
    <circle cx="28" cy="27" r="3" stroke="#eef4f6" strokeWidth="3" />
  </svg>
);

const OneNoteBack = (
  <>
    <path d="M15 5h13v22H15z" fill="#fff" />
    <path d="M16 8h10M16 12h10M16 16h10M16 20h10M16 24h10" stroke="#7b2f80" strokeWidth="1.200" />
    <path d="M29.500 6v6M29.500 14v5M29.500 21v5" stroke="#fff" strokeWidth="2" />
    <path d="M0 4l19-3v30L0 28z" fill="#7b2f80" />
  </>
);

const ExcelBack = (
  <>
    <path d="M8 2h24v28H8z" fill="#197243" />
    <path d="M20 2h12v9H20z" fill="#35c481" />
    <path d="M8 2h12v9H8z" fill="#22a366" />
    <path d="M20 11h12v9H20z" fill="#22a366" />
    <path d="M20 20h12v10H20z" fill="#185b37" />
  </>
);

const OutlookBack = (
  <>
    <path d="M10 2h20v14H10z" fill="#1278c6" />
    <path d="M20 2h10v12H20z" fill="#4fc0f0" />
    <path d="M8 14l12 7 12-7v16H8z" fill="#1a88d8" />
    <path d="M32 14v16L14 21z" fill="#3aa6e8" />
  </>
);

const PowerPointBack = (
  <>
    <circle cx="17" cy="16" r="14.500" fill="#d8502f" />
    <path d="M17 1.500A14.500 14.500 0 0 1 31.500 16H17z" fill="#fa9373" />
    <path d="M17 1.500V16H2.500A14.500 14.500 0 0 1 17 1.500z" fill="#ee6a48" />
  </>
);

const WordBack = (
  <>
    <path d="M8 1h24v8H8z" fill="#41a5ee" />
    <path d="M8 9h24v7H8z" fill="#2b7cd3" />
    <path d="M8 16h24v7H8z" fill="#185abd" />
    <path d="M8 23h24v8H8z" fill="#103f91" />
  </>
);

const TASKS: { name: string; icon: React.ReactNode; open?: boolean; active?: boolean }[] = [
  { name: "Store", icon: <StoreIcon /> },
  { name: "File Explorer", icon: <ExplorerIcon />, open: true },
  { name: "Firefox", icon: <FirefoxIcon /> },
  { name: "Steam", icon: <SteamIcon /> },
  { name: "Internet Explorer", icon: <IeIcon /> },
  { name: "Chromium", icon: <ChromeIcon mono /> },
  { name: "Chrome", icon: <ChromeIcon />, open: true },
  { name: "Excel", icon: <OfficeTile letter="X" c="#107c41" back={ExcelBack} /> },
  { name: "OneNote", icon: <OfficeTile letter="N" c="#7b2f80" back={OneNoteBack} /> },
  { name: "Outlook", icon: <OfficeTile letter="O" c="#0f6cbd" back={OutlookBack} /> },
  { name: "PowerPoint", icon: <OfficeTile letter="P" c="#c43e1c" back={PowerPointBack} /> },
  { name: "Word", icon: <OfficeTile letter="W" c="#185abd" back={WordBack} />, open: true },
  { name: "Blender", icon: <BlenderLogo s={32} flat />, open: true, active: true },
  { name: "Task Manager", icon: <MonitorIcon />, open: true },
  { name: "Services", icon: <GearsIcon />, open: true },
];

/* ---------- composition ---------- */

const DataBlock = ({ icon, name, label, gap }: { icon: React.ReactNode; name: string; label: string; gap?: number }) => (
  <Group $w={192} $gap={gap}>
    <Cell $w={31} aria-label={`Browse ${label}`}>{icon}<Arrows /></Cell>
    <TextField aria-label={label} defaultValue={name} />
    <Cell $w={20} $tone="light" aria-label={`Add ${label}`}><Plus s={13} /></Cell>
    <Cell $w={20} $tone="light" aria-label={`Delete ${label}`}><Cross /></Cell>
  </Group>
);

const CheckField = ({ label, on }: { label: string; on?: boolean }) => (
  <Check $on={on}>
    <CheckBox type="checkbox" defaultChecked={on} />
    {label}
  </Check>
);

const NumberField = ({ label }: { label: string }) => (
  <NumberCell>
    <Caret flip />
    {label}
    <input defaultValue="0.000" />
    <Caret />
  </NumberCell>
);

const NewCell = styled(Cell).attrs({ $tone: "light" as Tone, $grow: true, $pad: 5 })`
  > span { flex: 1; }
`;

const Properties = () => (
  <Panel>
    <CornerMarks right />
    <Section $min={40}>
      <SectionHead><Triangle /><SectionTitle>UV Vertex</SectionTitle><Grip /></SectionHead>
    </Section>
    <Section>
      <SectionHead><Triangle /><SectionTitle>Display</SectionTitle><Grip /></SectionHead>
      <Stack $top={8}>
        <Caption>Coordinates:</Caption>
        <CheckField label="Normalized" />
      </Stack>
      <Stack $top={6}>
        <Caption>Cursor Location:</Caption>
        <NumberPair><NumberField label="X:" /><NumberField label="Y:" /></NumberPair>
      </Stack>
      <Stack $top={11}>
        <Caption>UVs:</Caption>
        <Segments>
          {["Outline", "Dash", "Black", "White"].map((t, i) => (
            <Segment key={t} $on={i === 0} aria-pressed={i === 0}>{t}</Segment>
          ))}
        </Segments>
      </Stack>
      <Stack $top={5} $gap={2}>
        <Row><Half $w={106}><CheckField label="Draw Faces" on /></Half><Half><CheckField label="Stretch" /></Half></Row>
        <Row>
          <Half $w={106}><CheckField label="Smooth" /></Half>
          <Segments $disabled>
            <Segment $on disabled>Angle</Segment>
            <Segment disabled>Area</Segment>
          </Segments>
        </Row>
        <CheckField label="Modified" />
      </Stack>
      <Stack $top={5} $gap={2} $bottom={7}>
        <CheckField label="Draw Other Objects" />
        <Row>
          <Caption $w={67} $dim>Filter:</Caption>
          <SelectShell $disabled $gap={0}>
            <ImageIcon page />
            <Select aria-label="Filter" disabled><option>Same Image</option></Select>
            <Arrows dim />
          </SelectShell>
        </Row>
      </Stack>
    </Section>
    <Section $last>
      <SectionHead>
        <Triangle />
        <CheckBox type="checkbox" defaultChecked aria-label="Grease Pencil Layers" />
        <SectionTitle>Grease Pencil Layers</SectionTitle>
        <Grip />
      </SectionHead>
      <Stack $top={8} $gap={5}>
        <Group $gap={0}>
          <Cell $w={31} aria-label="Browse grease pencil"><PencilIcon /><Arrows /></Cell>
          <NewCell><Plus s={12} /><span>New</span></NewCell>
        </Group>
        <Group $gap={0}><Cell $tone="light" $grow>New Layer</Cell></Group>
      </Stack>
    </Section>
  </Panel>
);

export default function App() {
  return (
    <Window>
      <GlobalStyle />
      <TitleBar>
        <TitleIcon><BlenderLogo s={16} flat /></TitleIcon>
        <Title>{"Blender* [D:\\blend files\\table lamp.blend]"}</Title>
        <WindowButtons>
          <WindowButton aria-label="Minimize"><svg width="8" height="3"><path d="M0 0h8v3H0z" fill="currentColor" /></svg></WindowButton>
          <WindowButton aria-label="Restore">
            <svg width="10" height="10" fill="none" stroke="currentColor"><path d="M.5 3.500h6v6h-6zM.5 2.500h6M2.500.5h7v7" /></svg>
          </WindowButton>
          <WindowButton $close aria-label="Close">
            <svg width="8" height="8"><path d="M0 0l8 8M8 0L0 8" stroke="currentColor" strokeWidth="1.600" /></svg>
          </WindowButton>
        </WindowButtons>
      </TitleBar>

      <HeaderBar>
        <CornerMarks />
        <CornerMarks right />
        <Group $gap={0}><Cell $w={30} aria-label="Editor type"><InfoIcon /><Arrows /></Cell></Group>
        <Menus>
          {["File", "Render", "Window", "Help"].map((m) => <MenuButton key={m}>{m}</MenuButton>)}
        </Menus>
        <DataBlock icon={<ScreenIcon />} name="UV Editing" label="Screen" />
        <DataBlock icon={<SceneIcon />} name="Scene" label="Scene" gap={16} />
        <SelectShell $w={117} $gap={18}>
          <Select aria-label="Render engine"><option>Cycles Render</option></Select>
          <Arrows />
        </SelectShell>
        <BlenderLogo s={17} />
        <Stats>v2.79.7 | Verts:1,300/1,300 | Edges:2,596/2,596 | Faces:1,298/1,298 | Tris:2,596 | Mem: 1.56 GB | switch base</Stats>
      </HeaderBar>

      <Editor>
        <Canvas>
          <UvLayout />
          <ToolTab aria-label="Show tools">
            <svg width="7" height="7"><path d="M3.500 0v7M0 3.500h7" stroke="#8c8c8c" strokeWidth="2" /></svg>
          </ToolTab>
        </Canvas>
        <Properties />
      </Editor>

      <HeaderBar $bottom>
        <CornerMarks />
        <Group $gap={0}><Cell $w={30} aria-label="Editor type"><ImageIcon /><Arrows /></Cell></Group>
        <Menus $bottom>
          {["View", "Select", "Image", "UVs"].map((m) => <MenuButton key={m}>{m}</MenuButton>)}
        </Menus>
        <Group $w={153}>
          <Cell $w={31} aria-label="Browse image"><ImageIcon page /><Arrows /></Cell>
          <Cell $tone="light" $w={60}><Plus s={13} /><span>New</span></Cell>
          <Cell $tone="light" $grow><FolderIcon />Open</Cell>
        </Group>
        <Group><Cell $w={18} $tone="light" aria-label="Pin"><PinIcon /></Cell></Group>
        <SelectShell $w={67} $tight>
          <ImageIcon page />
          <Select aria-label="Mode"><option>View</option></Select>
          <Arrows />
        </SelectShell>
        <Group><Cell $w={30} aria-label="Pivot"><PivotIcon /><Arrows /></Cell></Group>
        <Group><Cell $w={18} $tone="light" aria-label="Sync selection"><SyncIcon /></Cell></Group>
        <Group $w={80}>
          {(["vertex", "edge", "face", "island"] as const).map((k) => (
            <Cell key={k} $grow $tone={k === "vertex" ? "blue" : "dark"} aria-label={k}><ModeIcon kind={k} /></Cell>
          ))}
        </Group>
        <Group><Cell $w={30} aria-label="Sticky selection"><SnapTarget /><Arrows /></Cell></Group>
        <Group><Cell $w={30} aria-label="Proportional editing"><FalloffIcon /><Arrows /></Cell></Group>
        <Group>
          <Cell $w={19} $tone="light" aria-label="Snap"><MagnetIcon /></Cell>
          <Cell $w={31} aria-label="Snap element"><IncrementIcon /><Arrows /></Cell>
        </Group>
        <Group $w={132}><FieldShell><UvIcon /><TextField aria-label="UV map" defaultValue="UVMap" /></FieldShell></Group>
        <Group $gap={17}><Cell $w={18} aria-label="Lock"><LockIcon /></Cell></Group>
        <Group $w={128}>
          <Cell $tone="light" $grow>
            <svg width="13" height="11"><path d="M1 1h8q3 0 3 3v3q0 3-3 3H1z" fill="none" stroke="#fff" strokeWidth="2" /></svg>
            Quick D-NOISE
          </Cell>
          <Cell $tone="light" $w={20} aria-label="More">
            <svg width="14" height="8"><ellipse cx="7" cy="4" rx="6" ry="3.500" fill="#808080" /><path d="M2 2q5 4 10 0" stroke="#b5b5b5" fill="none" /></svg>
          </Cell>
        </Group>
      </HeaderBar>

      <TaskBar>
        <Tasks>
          <Task $w={48} aria-label="Start"><WindowsIcon /></Task>
          {TASKS.map((t) => (
            <Task key={t.name} aria-label={t.name} $open={t.open} $active={t.active}>{t.icon}</Task>
          ))}
        </Tasks>
        <Tray>
          <svg width="8" height="6"><path d="M4 0l4 6H0z" fill="#fff" /></svg>
          <svg width="15" height="14" viewBox="0 0 15 14">
            <path d="M0 4.500h3L7 1v12L3 9.500H0z" fill="#fff" />
            <path d="M9 4.500q2 2.500 0 5M11 2.500q3.500 4.500 0 9" stroke="#fff" fill="none" />
          </svg>
          <svg width="15" height="14" viewBox="0 0 15 14" fill="none" stroke="#fff">
            <path d="M4.500 3.500h9.500v6.500H5M7 12.500h5M9.500 10v2.500M2.500 5v8M.5 1v3.500h4V1M2.500 0v2" strokeWidth="1.200" />
          </svg>
          <svg width="16" height="16" viewBox="0 0 16 16">
            <path d="M1.500 1v14" stroke="#fff" strokeWidth="1.500" />
            <path d="M3 2h5l1 1h4v6H8L7 8H3z" fill="#fff" />
            <circle cx="11" cy="10.500" r="4.500" fill="#cf3232" />
            <path d="M9 8.500l4 4M13 8.500l-4 4" stroke="#fff" strokeWidth="1.300" />
          </svg>
          <Clock>6:02 PM<br />6/10/2019</Clock>
        </Tray>
      </TaskBar>
    </Window>
  );
}
